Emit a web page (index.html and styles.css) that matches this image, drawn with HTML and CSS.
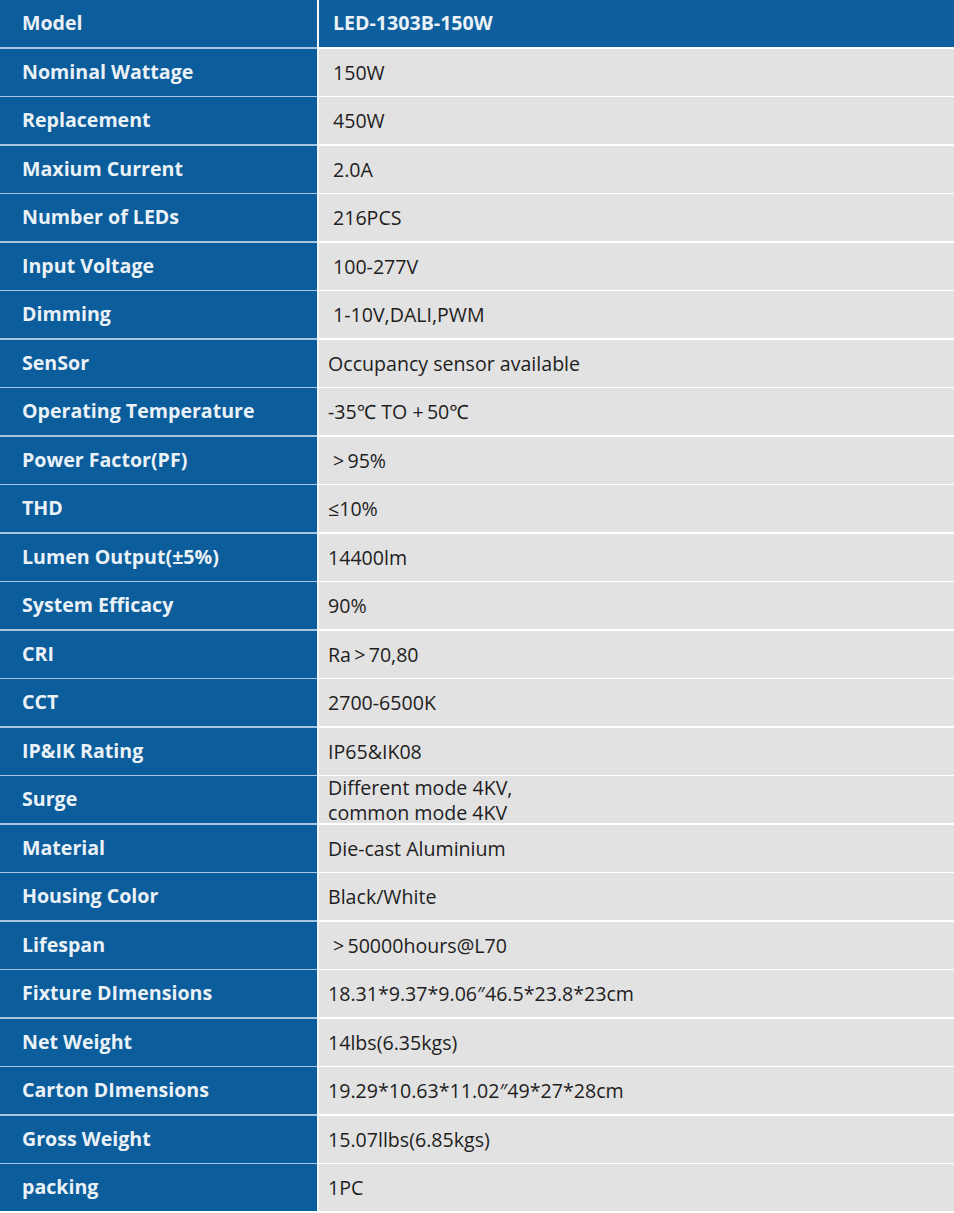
FILE: index.html
```html
<!DOCTYPE html>
<html>
<head>
<meta charset="utf-8">
<link rel="stylesheet" href="styles.css">
</head>
<body>
<div class="spec">
  <div class="label head">Model</div><div class="value head-value">LED-1303B-150W</div>
  <div class="label">Nominal Wattage</div><div class="value indent">150W</div>
  <div class="label">Replacement</div><div class="value indent">450W</div>
  <div class="label">Maxium Current</div><div class="value indent">2.0A</div>
  <div class="label">Number of LEDs</div><div class="value indent">216PCS</div>
  <div class="label">Input Voltage</div><div class="value indent">100-277V</div>
  <div class="label">Dimming</div><div class="value indent">1-10V,DALI,PWM</div>
  <div class="label">SenSor</div><div class="value">Occupancy sensor available</div>
  <div class="label">Operating Temperature</div><div class="value">-35℃ TO +&#8201;50℃</div>
  <div class="label">Power Factor(PF)</div><div class="value indent">&gt;&#8201;95%</div>
  <div class="label">THD</div><div class="value">≤10%</div>
  <div class="label">Lumen Output(±5%)</div><div class="value">14400lm</div>
  <div class="label">System Efficacy</div><div class="value">90%</div>
  <div class="label">CRI</div><div class="value">Ra&#8201;&gt;&#8201;70,80</div>
  <div class="label">CCT</div><div class="value">2700-6500K</div>
  <div class="label">IP&amp;IK Rating</div><div class="value">IP65&amp;IK08</div>
  <div class="label">Surge</div><div class="value multi"><span class="line">Different mode 4KV,</span><span class="line">common mode 4KV</span></div>
  <div class="label">Material</div><div class="value">Die-cast Aluminium</div>
  <div class="label">Housing Color</div><div class="value">Black/White</div>
  <div class="label">Lifespan</div><div class="value indent">&gt;&#8201;50000hours@L70</div>
  <div class="label">Fixture DImensions</div><div class="value">18.31*9.37*9.06″46.5*23.8*23cm</div>
  <div class="label">Net Weight</div><div class="value">14lbs(6.35kgs)</div>
  <div class="label">Carton DImensions</div><div class="value">19.29*10.63*11.02″49*27*28cm</div>
  <div class="label">Gross Weight</div><div class="value">15.07llbs(6.85kgs)</div>
  <div class="label">packing</div><div class="value">1PC</div>
</div>
</body>
</html>
```
FILE: styles.css
```css
html, body {
  margin: 0;
  padding: 0;
  background: #ffffff;
}
.spec {
  display: grid;
  grid-template-columns: 317px 1fr;
  grid-auto-rows: 47px;
  column-gap: 2px;
  row-gap: 1.5px;
  width: 954px;
  background: linear-gradient(to right, #a9c7e1 0, #a9c7e1 317px, #f4f6f8 317px, #f4f6f8 319px, #ffffff 319px);
  font-family: "Open Sans", "Noto Sans", sans-serif;
  font-size: 19.6px;
}
.label {
  background: #0c5d9b;
  color: #eaf1f7;
  font-weight: 700;
  padding-left: 22px;
  display: flex;
  align-items: center;
  padding-bottom: 2px;
}
.value {
  background: #e2e2e2;
  color: #1e1e1e;
  padding-left: 9px;
  display: flex;
  align-items: center;
}
.indent {
  padding-left: 14px;
}
.head-value {
  background: #0d5f9e;
  color: #eaf1f7;
  font-weight: 700;
  padding-left: 14px;
  padding-bottom: 2px;
}
.multi {
  flex-direction: column;
  align-items: flex-start;
  justify-content: center;
}
.line {
  display: block;
  line-height: 25px;
  height: 25px;
}
```
